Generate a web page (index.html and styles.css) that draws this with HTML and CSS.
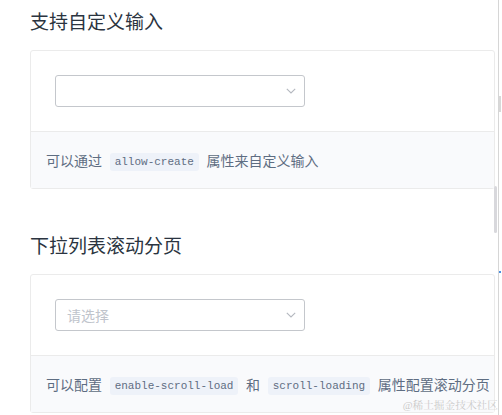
FILE: index.html
```html
<!DOCTYPE html>
<html lang="zh-CN">
<head>
<meta charset="utf-8">
<title>Select demo</title>
<link rel="stylesheet" href="styles.css">
</head>
<body>
<div class="page">
  <main class="main">
    <h3 class="title first">支持自定义输入</h3>
    <section class="card">
      <div class="source">
        <div class="select">
          <span class="placeholder"></span>
          <svg class="arrow" width="10" height="6" viewBox="0 0 10 6"><path d="M0.8 0.8 L5 4.9 L9.2 0.8" fill="none" stroke="#b4b8bf" stroke-width="1.1"/></svg>
        </div>
      </div>
      <div class="meta">
        <span>可以通过 <code>allow-create</code> 属性来自定义输入</span>
      </div>
    </section>

    <h3 class="title">下拉列表滚动分页</h3>
    <section class="card">
      <div class="source">
        <div class="select">
          <span class="placeholder">请选择</span>
          <svg class="arrow" width="10" height="6" viewBox="0 0 10 6"><path d="M0.8 0.8 L5 4.9 L9.2 0.8" fill="none" stroke="#b4b8bf" stroke-width="1.1"/></svg>
        </div>
      </div>
      <div class="meta">
        <span>可以配置 <code>enable-scroll-load</code> 和 <code>scroll-loading</code> 属性配置滚动分页</span>
      </div>
    </section>
    <div class="thumb"></div>
    <div class="watermark">@稀土掘金技术社区</div>
  </main>
  <aside class="side">
    <div class="side-bar"></div>
    <div class="side-dot"></div>
  </aside>
</div>
</body>
</html>
```
FILE: styles.css
```css
html, body {
  margin: 0;
  padding: 0;
  background: #fff;
}
body {
  font-family: "Noto Sans", "Noto Sans CJK SC", sans-serif;
  overflow: hidden;
}
.page {
  display: flex;
  height: 415px;
  overflow: hidden;
}
.main {
  position: relative;
  width: 499px;
  box-sizing: border-box;
  padding: 0 3px 0 30px;
  border-right: 1px solid #d6d6d6;
  flex: none;
}
.title {
  margin: 48px 0 18px;
  font-size: 19px;
  line-height: 19px;
  font-weight: 400;
  color: #2b3440;
}
.title.first {
  margin-top: 13px;
}
.card {
  border: 1px solid #ebebeb;
  border-radius: 3px;
}
.source {
  padding: 24px;
}
.select {
  width: 250px;
  height: 32px;
  box-sizing: border-box;
  border: 1px solid #c4c7cc;
  border-radius: 3px;
  display: flex;
  align-items: center;
  justify-content: space-between;
  padding: 0 8px 0 11px;
}
.placeholder {
  font-size: 14px;
  color: #c0c4cc;
}
.arrow {
  display: block;
}
.meta {
  border-top: 1px solid #ebebeb;
  background: #f9fafc;
  height: 56px;
  display: flex;
  align-items: center;
  padding: 0 15px;
  font-size: 14px;
  color: #5e6d82;
  white-space: nowrap;
}
code {
  font-family: "Liberation Mono", "DejaVu Sans Mono", monospace;
  font-size: 11px;
  line-height: 18px;
  display: inline-block;
  padding: 0 5px;
  margin: 0 4px;
  background: #eef2f9;
  color: #5e6d82;
  border-radius: 3px;
  vertical-align: 1px;
}
.thumb {
  position: absolute;
  right: 1px;
  top: 186px;
  width: 3px;
  height: 47px;
  background: #d8d8dc;
  border-radius: 2px;
}
.watermark {
  position: absolute;
  right: 0;
  bottom: 3px;
  font-family: "Liberation Serif", "Noto Serif CJK SC", "Noto Sans CJK SC", serif;
  font-size: 10.7px;
  color: #c9c9c9;
  text-shadow: 0 0 1px #fff;
}
.side {
  width: 2px;
  flex: none;
  display: flex;
  flex-direction: column;
}
.side-bar {
  margin-top: 96px;
  height: 16px;
  background: #d8d8d8;
}
.side-dot {
  margin-top: 159px;
  height: 2px;
  background: #4a8fe0;
}
```
